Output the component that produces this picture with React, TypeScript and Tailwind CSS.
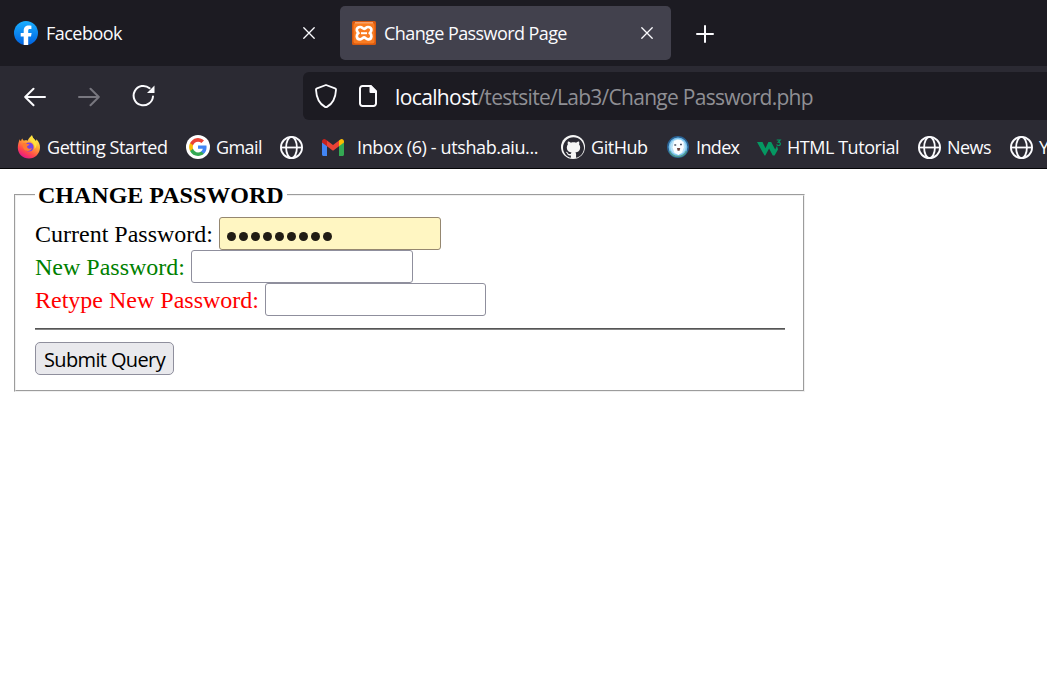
import React from 'react';
import { SiGithub } from 'react-icons/si';

const ui = "font-['Open_Sans','Noto_Sans',sans-serif]";

function Globe() {
  return (
    <svg width="24" height="24" viewBox="0 0 24 24" fill="none" stroke="#fbfbfe" strokeWidth="1.8" className="shrink-0">
      <circle cx="11.500" cy="12.500" r="10.600" />
      <ellipse cx="11.500" cy="12.500" rx="5.400" ry="10.600" />
      <path d="M.9 12.500h21.200" />
    </svg>
  );
}

function Close() {
  return (
    <svg width="12" height="12" viewBox="0 0 12 12" stroke="#fbfbfe" strokeWidth="1.3" strokeLinecap="round" className="shrink-0">
      <path d="M.8.8l10.400 10.400M11.200.8L.8 11.200" />
    </svg>
  );
}

function Facebook() {
  return (
    <svg width="24" height="24" viewBox="0 0 24 24" className="shrink-0">
      <defs>
        <linearGradient id="fb" x1="0" y1="0" x2="0" y2="1">
          <stop offset="0" stopColor="#19afff" />
          <stop offset="1" stopColor="#0062e0" />
        </linearGradient>
      </defs>
      <circle cx="12" cy="12" r="12" fill="url(#fb)" />
      <path d="M9.700 24v-8.400H6.700V12h3V9.400C9.700 6.300 11.800 4.400 14.600 4.400c1 0 2.300.2 2.800.3v3.300h-1.500c-1.400 0-1.700.7-1.700 1.600V12h3.400l-.6 3.600h-2.800V24z" fill="#fff" />
    </svg>
  );
}

function Xampp() {
  return (
    <svg width="24" height="24" viewBox="0 0 24 24" className="shrink-0">
      <rect width="24" height="24" rx="1.500" fill="#d9590f" />
      <rect x="1.500" y="2" width="21" height="20.500" rx="2" fill="#f97c22" />
      <path d="M3 1.800h18" stroke="#ffc196" strokeWidth="1" />
      <path
        d="M8.200 6C5.800 6 4.600 7.400 4.800 9.200c.1 1.300.9 2.100 1.500 2.900-.9.800-1.600 1.800-1.500 3.300.1 1.800 1.500 3 3.400 2.900 1.900-.1 2.600-1.900 3.900-1.900s2 1.800 3.900 1.900c1.900.1 3.300-1.100 3.400-2.900.1-1.500-.6-2.500-1.500-3.300.6-.8 1.400-1.600 1.500-2.900.2-1.800-1-3.200-3.400-3.200-2 0-2.600 1.900-3.900 1.900S10.100 6 8.200 6z"
        fill="none"
        stroke="#fff"
        strokeWidth="2.700"
      />
      <path d="M9 12.200h6" stroke="#fff" strokeWidth="2" />
    </svg>
  );
}

function Firefox() {
  return (
    <svg width="24" height="24" viewBox="0 0 24 24" className="shrink-0">
      <defs>
        <linearGradient id="ff" x1=".8" y1=".1" x2=".3" y2="1">
          <stop offset="0" stopColor="#fff44f" />
          <stop offset=".35" stopColor="#ffa436" />
          <stop offset=".7" stopColor="#ff4a4a" />
          <stop offset="1" stopColor="#e3128c" />
        </linearGradient>
      </defs>
      <path d="M2.700 4.300c.3 1 .8 1.500 1.400 1.900.1-1.300.6-2 1.300-2.600.1 1.200.8 1.700 1.600 2.100 1.100-.5 2.500-.4 3.700 0C11.200 3.700 13.400 2 15 .3c.1 2.600 2.700 4 3.900 5.900.4-.7.4-1.200.3-1.900 2.700 2.300 4 5.300 3.800 8.500C22.800 18.800 18 23.600 12 23.600S.8 19 .8 12.800c0-3.200.9-6.100 1.900-8.500z" fill="url(#ff)" />
      <path d="M15 .3c-1.900 1.900-2.500 3.800-1.500 5.600 2.700 1.300 4.700 4.400 4 8 2.300-2.200 3-5.200 1.400-7.700C17.600 4.200 15.200 3 15 .3z" fill="#ffe13c" />
      <circle cx="12" cy="12" r="4.600" fill="#7543e3" />
      <path d="M5.600 8.500c1.800-.8 3.500-.3 4.700.5l2.200.2c-.1 1.300-2.300 1.500-2.500 2.500.8 2.500 3.500 2.600 5 1-1.100 4-6.500 4.300-8.500.7-.8-1.500-1-3.200-.9-4.900z" fill="#ff7b31" />
    </svg>
  );
}

function Google() {
  return (
    <svg width="24" height="24" viewBox="0 0 24 24" className="shrink-0">
      <circle cx="12" cy="12" r="12" fill="#fff" />
      <g transform="translate(2.300 2.300) scale(.81)">
        <path fill="#4285f4" d="M22.560 12.250c0-.78-.07-1.530-.2-2.250H12v4.260h5.920a5.060 5.060 0 0 1-2.200 3.320v2.770h3.570c2.080-1.920 3.270-4.740 3.270-8.100z" />
        <path fill="#34a853" d="M12 23c2.970 0 5.460-.98 7.280-2.660l-3.570-2.770c-.98.66-2.230 1.060-3.710 1.060-2.860 0-5.290-1.930-6.160-4.530H2.180v2.840A11 11 0 0 0 12 23z" />
        <path fill="#fbbc05" d="M5.840 14.090a6.600 6.600 0 0 1 0-4.180V7.070H2.180a11 11 0 0 0 0 9.860z" />
        <path fill="#ea4335" d="M12 5.380c1.620 0 3.060.56 4.210 1.640l3.150-3.150A10.900 10.900 0 0 0 2.180 7.070l3.660 2.840C6.710 7.310 9.140 5.380 12 5.380z" />
      </g>
    </svg>
  );
}

function GmailM() {
  return (
    <svg width="22" height="17" viewBox="0 0 22 17" className="shrink-0">
      <path d="M0 3v12.500C0 16.300.7 17 1.500 17H5V6.500z" fill="#4285f4" />
      <path d="M22 3v12.500c0 .8-.7 1.500-1.500 1.500H17V6.500z" fill="#34a853" />
      <path d="M5 1.500l6 4.600 6-4.600v5.700l-6 4.600-6-4.600z" fill="#ea4335" />
      <path d="M0 2.500C0 .3 2.300-.7 4 .7l1 .8v5.700L0 3.600z" fill="#c5221f" />
      <path d="M22 2.500C22 .3 19.700-.7 18 .7l-1 .8v5.700l5-3.600z" fill="#fbbc04" />
    </svg>
  );
}

function IndexIcon() {
  return (
    <svg width="22" height="22" viewBox="0 0 22 22" className="shrink-0">
      <circle cx="11" cy="11" r="10.200" fill="#7cc4ee" stroke="#2a6294" strokeWidth="1.600" />
      <path d="M2.500 15a9.300 9.300 0 0 0 17 0" fill="none" stroke="#4f9a8e" strokeWidth="1.600" />
      <circle cx="11" cy="10.800" r="7.800" fill="#b9e2f7" />
      <path d="M7 5l3-1.300 4 .3 2.500 2.500.3 5-1.800 5-3.500 2.500-4-2.200-2-5.300z" fill="#fbfdff" />
      <path d="M7.300 9h1.900M13 8.500h1.900" stroke="#4a5263" strokeWidth="1.700" />
      <path d="M10 12h3.200l-.6 2.800h-2z" fill="#6b4540" />
    </svg>
  );
}

function W3() {
  return (
    <svg width="25" height="17" viewBox="0 0 25 17" fill="none" stroke="#059862" className="shrink-0">
      <path d="M0 3h5.500l3 6.200L11.400 3h2.800l4 7.400 1.800-3.600 1 3.600-3.400 6.200h-1.800l-3.700-7-3.800 7H7.500z" fill="#059862" stroke="none" />
      <path d="M19.700 1h3.500l-1.900 2.200c2.700-.2 2.700 3.500.2 3.300-.8 0-1.500-.3-1.900-1" strokeWidth="1.200" />
    </svg>
  );
}

function Mark({ icon, iconBox, label, box, track }: { icon: React.ReactNode; iconBox: string; label?: string; box?: string; track?: string }) {
  return (
    <div className="flex shrink-0 items-center">
      <div className={`flex shrink-0 items-center ${iconBox}`}>{icon}</div>
      {label && <span className={`shrink-0 whitespace-nowrap text-[18px] leading-6 ${box} ${track}`}>{label}</span>}
    </div>
  );
}

const inputBox = 'h-[33px] shrink-0 rounded-[3px] border border-[#8f8f9d] bg-white';

export default function App() {
  return (
    <div className="flex h-[687px] w-[1047px] flex-col overflow-hidden bg-white">
      <header className={`flex shrink-0 flex-col text-[#fbfbfe] ${ui}`}>
        <div className="flex h-[66px] bg-[#1c1b22] pt-1.5">
          <div className="flex h-[54px] w-[340px] shrink-0 items-center pr-[25px] pl-[14px]">
            <Facebook />
            <span className="ml-2 flex-1 pt-px text-[18px] tracking-[-0.52px]">Facebook</span>
            <Close />
          </div>
          <div className="flex h-[54px] w-[331px] shrink-0 items-center rounded-[5px] bg-[#42414d] pr-[18px] pl-3">
            <Xampp />
            <span className="ml-2 flex-1 pt-px whitespace-nowrap text-[18px] tracking-[-0.58px]">Change Password Page</span>
            <Close />
          </div>
          <div className="flex h-[54px] items-center pt-0.5 pl-[25px]">
            <svg width="18" height="18" viewBox="0 0 18 18" stroke="#fbfbfe" strokeWidth="2" strokeLinecap="round">
              <path d="M9 1v16M1 9h16" />
            </svg>
          </div>
        </div>
        <div className="flex h-[60px] items-center bg-[#2b2a33]">
          <div className="flex w-[303px] shrink-0 items-center pl-6">
            <svg width="22" height="20" viewBox="0 0 22 20" fill="none" stroke="#fbfbfe" strokeWidth="2" strokeLinecap="round" strokeLinejoin="round" className="mt-0.5">
              <path d="M21 10H1.500M9.500 1.700L1.200 10l8.300 8.300" />
            </svg>
            <svg width="22" height="20" viewBox="0 0 22 20" fill="none" stroke="#78777f" strokeWidth="2" strokeLinecap="round" strokeLinejoin="round" className="mt-0.5 ml-8">
              <path d="M1 10h19.500M12.500 1.700l8.300 8.300-8.300 8.300" />
            </svg>
            <svg width="24" height="24" viewBox="0 0 24 24" fill="none" stroke="#fbfbfe" strokeWidth="2" strokeLinecap="round" className="ml-8">
              <path d="M21 12.500A9.700 9.700 0 1 1 17.600 4.200" />
              <path d="M22.500 1.500v7.500H15z" fill="#fbfbfe" stroke="none" />
            </svg>
          </div>
          <div className="flex h-12 flex-1 items-center rounded-l-[6px] bg-[#1c1b22] pl-3">
            <svg width="22" height="24" viewBox="0 0 22 24" fill="none" stroke="#fbfbfe" strokeWidth="1.800" strokeLinejoin="round">
              <path d="M11 1l9 3.300c.8.3 1.100.8 1 1.600-.4 7.500-2.600 13.500-9 17-.7.400-1.300.400-2 0C3.600 19.400 1.400 13.400 1 5.900c-.1-.8.2-1.300 1-1.600z" />
            </svg>
            <svg width="18" height="22" viewBox="0 0 18 22" fill="none" stroke="#fbfbfe" strokeWidth="2" strokeLinejoin="round" className="ml-[22px]">
              <path d="M3.500 1h8.200L17 6.300V18.500a2.500 2.500 0 0 1-2.500 2.500h-11A2.500 2.500 0 0 1 1 18.500v-15A2.500 2.500 0 0 1 3.500 1z" />
              <path d="M11.500 1v6H17z" fill="#fbfbfe" />
            </svg>
            <span className="ml-[18px] pt-[3px] whitespace-nowrap text-[21px] tracking-[-0.72px] text-[#8f8f94]">
              <span className="tracking-[-0.62px] text-[#fbfbfe]">localhost</span>/testsite/Lab3/Change Password.php
            </span>
          </div>
        </div>
        <nav className="flex h-[43px] items-center overflow-hidden border-b border-[#050507] bg-[#2b2a33] pl-[17px]">
          <Mark icon={<Firefox />} iconBox="w-[30px]" label="Getting Started" box="w-[139px]" track="tracking-[-0.45px]" />
          <Mark icon={<Google />} iconBox="w-[30px]" label="Gmail" box="w-[64px]" track="tracking-[-0.6px]" />
          <Mark icon={<Globe />} iconBox="w-[42px]" />
          <Mark icon={<GmailM />} iconBox="w-[35px]" label="Inbox (6) - utshab.aiu..." box="w-[204px]" track="tracking-[-0.38px]" />
          <Mark
            icon={
              <span className="flex size-6 shrink-0 items-center justify-center rounded-full bg-[#f5f5f5]">
                <SiGithub size={21} color="#2b2a33" className="shrink-0" />
              </span>
            }
            iconBox="w-[30px]"
            label="GitHub"
            box="w-[76px]"
            track="tracking-[-0.45px]"
          />
          <Mark icon={<IndexIcon />} iconBox="w-[29px]" label="Index" box="w-[61px]" track="tracking-[-0.65px]" />
          <Mark icon={<W3 />} iconBox="w-[30px]" label="HTML Tutorial" box="w-[131px]" track="tracking-[-0.46px]" />
          <Mark icon={<Globe />} iconBox="w-[29px]" label="News" box="w-[63px]" track="tracking-[-0.55px]" />
          <Mark icon={<Globe />} iconBox="w-[29px]" label="Y" box="w-[20px]" track="tracking-[-0.3px]" />
        </nav>
      </header>

      <main className="pt-3 pl-[14px] font-['Liberation_Serif',serif] text-[24px] leading-[33px] text-black">
        <fieldset className="h-[211px] w-[791px] border-2 border-[#f0f0f0] pr-[18px] pl-[19px] [border-style:groove]">
          <legend className="h-[28px] px-[3px] leading-[28px] font-bold">CHANGE PASSWORD</legend>
          <div className="mt-2 flex h-[33px]">
            <span className="w-[184px] shrink-0 pt-px whitespace-nowrap">Current Password:</span>
            <div className="flex h-[33px] w-[222px] items-center gap-[3.1px] rounded-[3px] border border-[#958770] bg-[#fff6c2] pt-1.5 pl-[6.5px]">
              {Array.from({ length: 9 }, (_, i) => (
                <i key={i} className="size-[9px] shrink-0 rounded-full bg-[#211c14]" />
              ))}
            </div>
          </div>
          <div className="flex h-[33px] text-[#008000]">
            <span className="w-[156px] shrink-0 pt-px whitespace-nowrap">New Password:</span>
            <div className={`${inputBox} w-[222px]`} />
          </div>
          <div className="flex h-[33px] text-[#ff0000]">
            <span className="w-[230px] shrink-0 pt-px whitespace-nowrap">Retype New Password:</span>
            <div className={`${inputBox} w-[221px]`} />
          </div>
          <div className="mt-3 h-0.5 border-t border-[#555] bg-[#858585]" />
          <button className="mt-3 flex h-[33px] w-[139px] items-center justify-center rounded-[5px] border border-[#8f8f9d] bg-[#e9e9ed] pt-0.5 font-['Open_Sans','Noto_Sans',sans-serif] text-[20px] tracking-[-0.62px] whitespace-nowrap">
            Submit Query
          </button>
        </fieldset>
      </main>
    </div>
  );
}
